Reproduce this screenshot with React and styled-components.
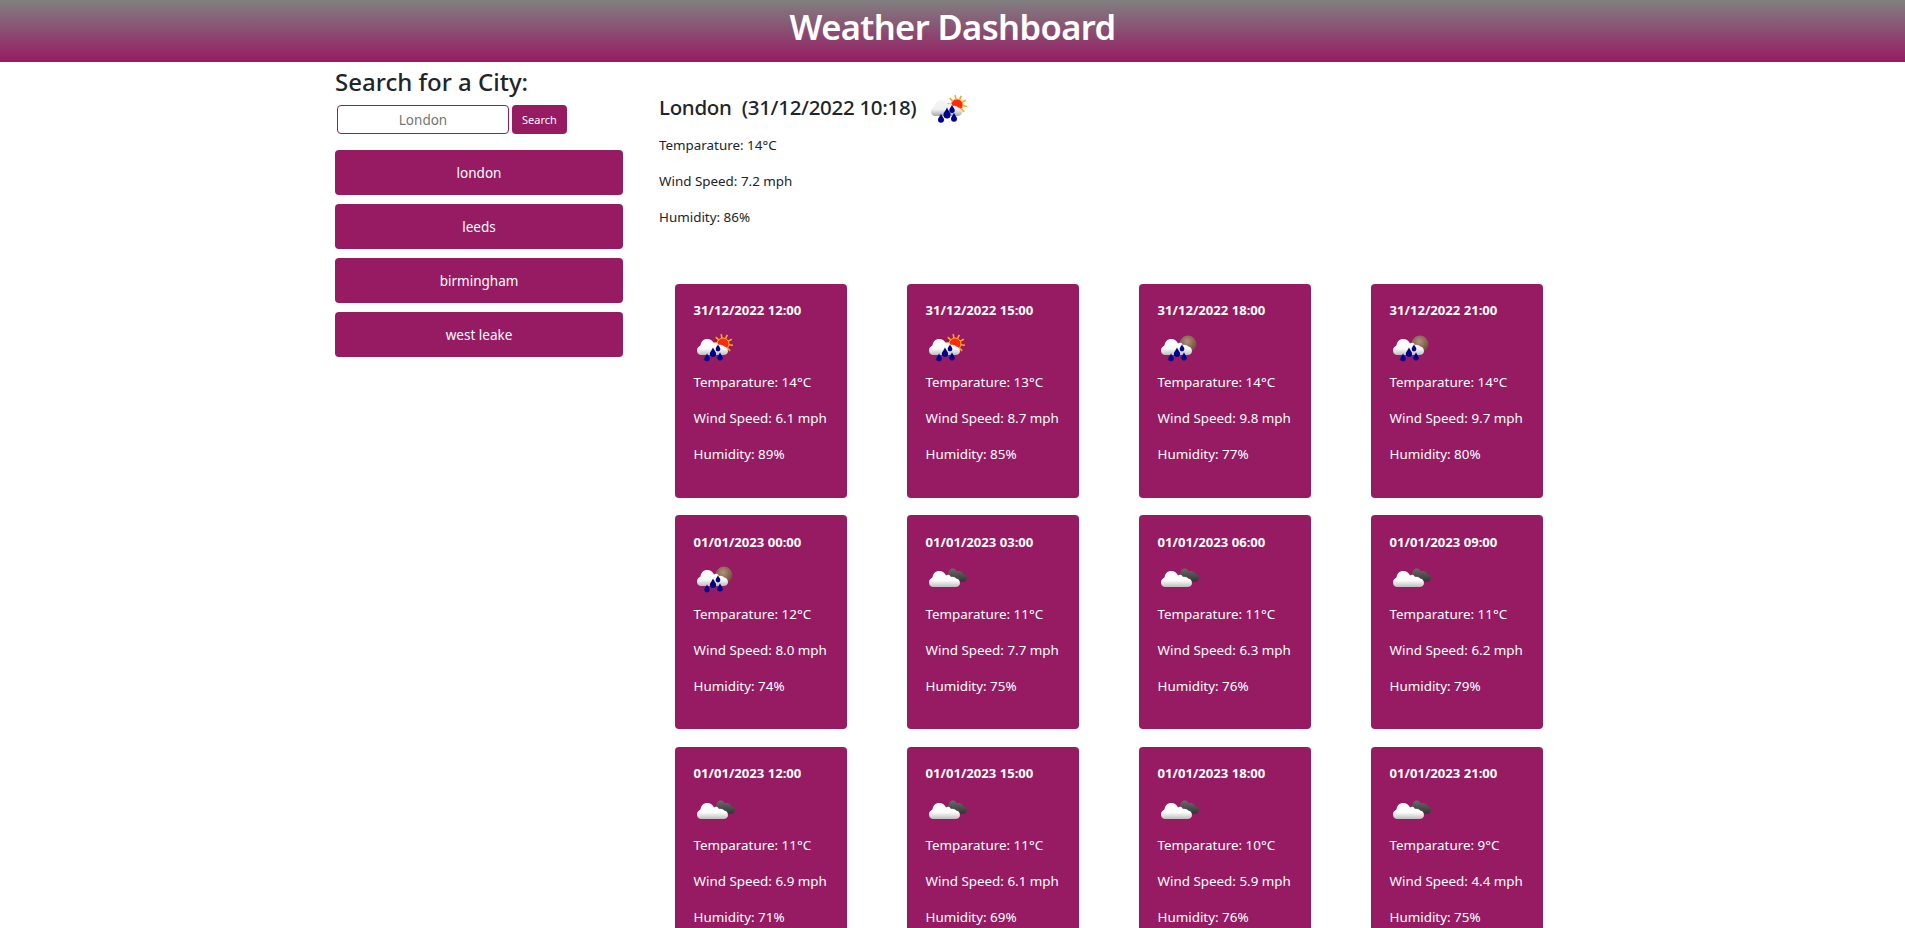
import React from "react";
import styled, { createGlobalStyle } from "styled-components";

const PURPLE = "#961b62";

const Global = createGlobalStyle`
  html, body { margin: 0; padding: 0; overflow: hidden; background: #fff; height: 928px; }
  * { box-sizing: border-box; }
  body { font-family: "Noto Sans", "Open Sans", sans-serif; color: #212529; }
`;

const Header = styled.header`
  height: 62px;
  background: linear-gradient(180deg, #808080 0%, ${PURPLE} 100%);
  display: flex;
  justify-content: center;
`;
const Title = styled.h1`
  margin: 0;
  color: #fff;
  font-size: 34.5px;
  line-height: 54px;
  font-weight: 600;
  letter-spacing: -0.6px;
`;
const Layout = styled.div`
  display: flex;
  padding-left: 335px;
  gap: 37px;
  align-items: flex-start;
`;
const Sidebar = styled.aside`
  width: 288px;
  flex: none;
  padding-top: 4.5px;
`;
const SearchHeading = styled.h2`
  margin: 0 0 9.5px;
  font-size: 24px;
  line-height: 29px;
  font-weight: 500;
  letter-spacing: 0;
`;
const SearchForm = styled.form`
  display: flex;
  gap: 3px;
  margin: 0 0 16px 2px;
`;
const SearchInput = styled.input`
  width: 172px;
  height: 29px;
  border: 1px solid ${PURPLE};
  border-radius: 4px;
  padding: 0 8px;
  text-align: center;
  font: 13.5px "Noto Sans", sans-serif;
  background: #fff;
  &::placeholder { color: #757575; opacity: 1; }
`;
const SearchButton = styled.button`
  width: 55px;
  height: 29px;
  border: 0;
  border-radius: 4px;
  padding: 0;
  background: ${PURPLE};
  color: #fff;
  font: 11px "Noto Sans", sans-serif;
`;
const CityList = styled.div`
  display: flex;
  flex-direction: column;
  gap: 9px;
`;
const CityButton = styled.button`
  height: 45px;
  border: 0;
  border-radius: 4px;
  padding: 1px 0 0;
  background: ${PURPLE};
  color: #fff;
  font: 13.5px "Noto Sans", sans-serif;
`;
const Main = styled.main`
  flex: 1;
  padding-top: 25px;
`;
const CurrentRow = styled.div`
  display: flex;
  align-items: flex-start;
  height: 47.5px;
`;
const CurrentTitle = styled.h3`
  margin: 5px 8px 0 -1px;
  font-size: 20.5px;
  line-height: 30px;
  font-weight: 500;
  letter-spacing: -0.3px;
  white-space: pre;
`;
const Stat = styled.p`
  margin: 0 0 15px;
  font-size: 13.4px;
  line-height: 21px;
  color: ${(p) => (p.$light ? "#fff" : "#212529")};
  white-space: nowrap;
`;
const MainStat = styled(Stat)`
  margin-left: -1px;
`;
const CardGrid = styled.div`
  display: grid;
  grid-template-columns: repeat(4, 172px);
  column-gap: 60px;
  row-gap: 17.5px;
  margin: 56px 0 0 15px;
`;
const Card = styled.article`
  height: 214px;
  background: ${PURPLE};
  border-radius: 4px;
  padding: 16.5px 0 0 18.5px;
  color: #fff;
`;
const CardDate = styled.div`
  font-size: 13.1px;
  line-height: 21px;
  font-weight: 700;
  white-space: nowrap;
`;
const IconSlot = styled.div`
  height: 51px;
  margin-left: -4px;
  padding-top: 4.5px;
`;
const IconSvg = styled.svg`
  display: block;
  flex: none;
  width: 50px;
  height: 50px;
`;

function Cloud({ id }) {
  return (
    <path
      d="M11.5 29 C8 29 7 26.5 7 24.5 C7 21.5 9 20 10.5 19.4 C11 15.5 13.5 13 17 13 C20.5 13 23 15 24 17.4 C25.5 16.4 28 16.6 29 19 C31 18.4 33 19.2 34.3 20.6 C36.6 21 38 23 38 25 C38 27.5 36 29 33.5 29 Z"
      fill={`url(#${id})`}
    />
  );
}
function Drop({ x, y, s = 1 }) {
  return (
    <path
      d={`M${x} ${y - 4.4 * s} C${x + 0.8 * s} ${y - 2.2 * s} ${x + 2.5 * s} ${y - 1 * s} ${x + 2.5 * s} ${y + 0.6 * s} A${2.5 * s} ${2.5 * s} 0 1 1 ${x - 2.5 * s} ${y + 0.6 * s} C${x - 2.5 * s} ${y - 1 * s} ${x - 0.8 * s} ${y - 2.2 * s} ${x} ${y - 4.4 * s} Z`}
      fill="#00008f"
    />
  );
}
function Sun() {
  const rays = Array.from({ length: 10 }, (_, i) => (i * Math.PI) / 5 - 0.5);
  return (
    <g>
      {rays.map((a, i) => (
        <line
          key={i}
          x1={33 + Math.cos(a) * 6}
          y1={18 + Math.sin(a) * 6}
          x2={33 + Math.cos(a) * 10}
          y2={18 + Math.sin(a) * 10}
          stroke="#ffa51e"
          strokeWidth="1.6"
        />
      ))}
      <circle cx="33" cy="18" r="6" fill="#ff2a10" />
      <circle cx="33" cy="18" r="6" fill="none" stroke="#ffb030" strokeWidth="1" />
    </g>
  );
}
function Moon() {
  return <circle cx="34" cy="18" r="8.5" fill="url(#moonGrad)" />;
}

function WeatherIcon({ kind, large }) {
  const rain = kind !== "clouds";
  return (
    <IconSvg viewBox="0 0 50 50">
      <defs>
        <linearGradient id="cloudGrad" x1="0" y1="0" x2="0" y2="1">
          <stop offset="0" stopColor="#ffffff" />
          <stop offset="0.6" stopColor="#fbfbfb" />
          <stop offset="1" stopColor="#bdbdbd" />
        </linearGradient>
        <linearGradient id="cloudGradLight" x1="0" y1="0" x2="0" y2="1">
          <stop offset="0" stopColor="#f6f6f6" />
          <stop offset="0.6" stopColor="#f0f0f0" />
          <stop offset="1" stopColor="#a8a8a8" />
        </linearGradient>
        <radialGradient id="moonGrad" cx="0.45" cy="0.35" r="0.7">
          <stop offset="0" stopColor="#b0937a" />
          <stop offset="0.7" stopColor="#7d5a48" />
          <stop offset="1" stopColor="#6a3f50" />
        </radialGradient>
        <linearGradient id="darkGrad" x1="0" y1="0" x2="0" y2="1">
          <stop offset="0" stopColor="#6a6a6a" />
          <stop offset="1" stopColor="#333333" />
        </linearGradient>
      </defs>
      {kind === "rainSun" && <Sun />}
      {kind === "rainMoon" && <Moon />}
      {kind === "clouds" && (
        <path
          d="M29 25 C26 25 25.5 22 26.5 20 C25.5 16 27 12 30 11.5 C32.5 11 34 12.5 35 14.5 C37 13.5 40 14 41 16.5 C43.5 17 45.5 19 45 21.5 C44.5 24 42.5 25 40 25 Z"
          fill="url(#darkGrad)"
        />
      )}
      <g transform={kind === "clouds" ? "translate(0 1)" : undefined}>
        <Cloud id={large ? "cloudGradLight" : "cloudGrad"} />
      </g>
      {rain && (
        <>
          <Drop x={17} y={32} s={large ? 1.2 : 1.05} />
          <Drop x={23} y={27} s={large ? 1.45 : 1.25} />
          <Drop x={30} y={31} s={large ? 1.2 : 1.1} />
          <Drop x={28} y={22.5} s={large ? 1.1 : 0.95} />
        </>
      )}
    </IconSvg>
  );
}

const CITIES = ["london", "leeds", "birmingham", "west leake"];
const FORECAST = [
  ["31/12/2022 12:00", "rainSun", "14", "6.1", "89"],
  ["31/12/2022 15:00", "rainSun", "13", "8.7", "85"],
  ["31/12/2022 18:00", "rainMoon", "14", "9.8", "77"],
  ["31/12/2022 21:00", "rainMoon", "14", "9.7", "80"],
  ["01/01/2023 00:00", "rainMoon", "12", "8.0", "74"],
  ["01/01/2023 03:00", "clouds", "11", "7.7", "75"],
  ["01/01/2023 06:00", "clouds", "11", "6.3", "76"],
  ["01/01/2023 09:00", "clouds", "11", "6.2", "79"],
  ["01/01/2023 12:00", "clouds", "11", "6.9", "71"],
  ["01/01/2023 15:00", "clouds", "11", "6.1", "69"],
  ["01/01/2023 18:00", "clouds", "10", "5.9", "76"],
  ["01/01/2023 21:00", "clouds", "9", "4.4", "75"],
];

export default function App() {
  return (
    <>
      <Global />
      <Header>
        <Title>Weather Dashboard</Title>
      </Header>
      <Layout>
        <Sidebar>
          <SearchHeading>Search for a City:</SearchHeading>
          <SearchForm onSubmit={(e) => e.preventDefault()}>
            <SearchInput placeholder="London" />
            <SearchButton>Search</SearchButton>
          </SearchForm>
          <CityList>
            {CITIES.map((c) => (
              <CityButton key={c}>{c}</CityButton>
            ))}
          </CityList>
        </Sidebar>
        <Main>
          <CurrentRow>
            <CurrentTitle>London  (31/12/2022 10:18)</CurrentTitle>
            <WeatherIcon kind="rainSun" large />
          </CurrentRow>
          <MainStat>Temparature: 14°C</MainStat>
          <MainStat>Wind Speed: 7.2 mph</MainStat>
          <MainStat>Humidity: 86%</MainStat>
          <CardGrid>
            {FORECAST.map(([date, kind, t, w, h]) => (
              <Card key={date}>
                <CardDate>{date}</CardDate>
                <IconSlot>
                  <WeatherIcon kind={kind} />
                </IconSlot>
                <Stat $light>Temparature: {t}°C</Stat>
                <Stat $light>Wind Speed: {w} mph</Stat>
                <Stat $light>Humidity: {h}%</Stat>
              </Card>
            ))}
          </CardGrid>
        </Main>
      </Layout>
    </>
  );
}
